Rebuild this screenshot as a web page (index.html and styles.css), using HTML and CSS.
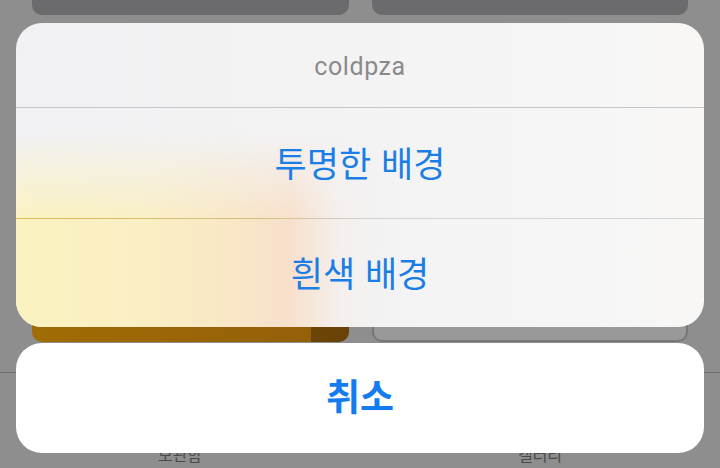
FILE: index.html
```html
<!DOCTYPE html>
<html lang="ko">
<head>
  <meta charset="UTF-8" />
  <meta name="viewport" content="width=device-width, initial-scale=1.0"/>
  <title>배경 선택</title>
  <link rel="stylesheet" href="styles.css">
</head>
<body>
  <div class="app">
    <div class="cards cards-top">
      <div class="card dark"></div>
      <div class="card dark"></div>
    </div>
    <div class="cards cards-bottom">
      <div class="card gold"></div>
      <div class="card grey"></div>
    </div>
    <div class="tabbar">
      <span class="tab">보관함</span>
      <span class="tab">갤러리</span>
    </div>
  </div>

  <div class="sheet">
    <div class="group">
      <div class="title">coldpza</div>
      <div class="sep"></div>
      <button class="action">투명한 배경</button>
      <div class="sep warm"></div>
      <button class="action">흰색 배경</button>
    </div>
    <button class="cancel">취소</button>
  </div>
</body>
</html>
```

FILE: styles.css
```css
html, body {
  margin: 0;
  height: 468px;
  overflow: hidden;
}

body {
  background-color: #8e8e8e;
  font-family: "Noto Sans CJK KR", "Noto Sans", sans-serif;
  position: relative;
}

/* app behind the sheet */
.cards {
  display: grid;
  grid-template-columns: 1fr 1fr;
  gap: 23px;
  padding: 0 32px;
}

.cards-top {
  height: 15px;
}

.cards-bottom {
  height: 142px;
  margin-top: 185px;
}

.card {
  border-radius: 0 0 10px 10px;
}

.dark {
  background-color: #6b6b6d;
}

.gold {
  background: linear-gradient(90deg, #a06c04 0%, #95600a 88%, #6b4407 88%, #6a4208 100%);
  border-radius: 10px;
}

.grey {
  background-color: #999;
  border: 2px solid #777;
  border-radius: 10px;
}

.tabbar {
  margin-top: 30px;
  border-top: 1px solid #6c6c6c;
  height: 95px;
  display: grid;
  grid-template-columns: 1fr 1fr;
  align-items: end;
  text-align: center;
}

.tab {
  font-size: 16px;
  color: #4a4a4a;
  padding-bottom: 2px;
}

/* action sheet */
.sheet {
  position: absolute;
  top: 23px;
  left: 16px;
  right: 16px;
  display: flex;
  flex-direction: column;
  gap: 16px;
}

.group {
  position: relative;
  isolation: isolate;
  border-radius: 26px;
  overflow: hidden;
  display: flex;
  flex-direction: column;
  background: linear-gradient(90deg, #f1f1f3 0%, #f3f3f4 50%, #f8f7f6 100%);
}

/* blurred glow of the gold card underneath */
.group::before {
  content: "";
  position: absolute;
  left: 0;
  right: 0;
  top: 110px;
  bottom: 0;
  z-index: -1;
  background: linear-gradient(90deg, #fbf2c0 0%, #faefc4 18%, #f9e8c6 30%, #f8e0cc 40%, rgba(246, 236, 230, 0.5) 47%, rgba(246, 240, 236, 0) 54%);
  -webkit-mask-image: linear-gradient(to bottom, transparent 0%, #000 45%);
  mask-image: linear-gradient(to bottom, transparent 0%, #000 45%);
}

.title {
  height: 84px;
  display: flex;
  align-items: center;
  justify-content: center;
  font-family: Roboto, "Noto Sans", sans-serif;
  font-size: 25px;
  letter-spacing: 0.6px;
  color: #8a8a8c;
  padding-top: 3px;
  box-sizing: border-box;
}

.sep {
  height: 1px;
  background-color: #c6c6c8;
}

.sep.warm {
  background: linear-gradient(90deg, #d9bd55 0%, #d6c07a 35%, #d2cbbb 46%, #d3d3d3 54%, #d3d3d3 100%);
}

.action, .cancel {
  border: none;
  background: transparent;
  font-family: "Noto Sans CJK KR", sans-serif;
  font-size: 35px;
  color: #1a7ee6;
  cursor: pointer;
  padding: 0 0 4px;
}

.action {
  height: 110px;
}

.action:last-child {
  height: 108px;
}

.cancel {
  height: 110px;
  background-color: #fff;
  border-radius: 26px;
  font-size: 37px;
  font-weight: bold;
  color: #137cf0;
  padding-bottom: 6px;
}
```
